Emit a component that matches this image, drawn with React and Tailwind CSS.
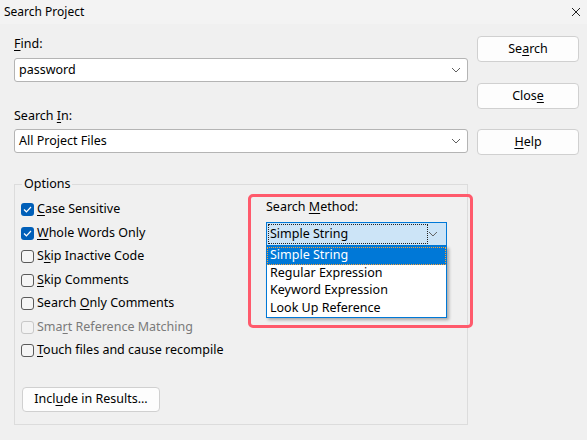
import React from 'react'

const font = { fontFamily: '"Noto Sans", "Open Sans", sans-serif' }

const U = ({ children }) => <span className="underline underline-offset-[2px]">{children}</span>

const Chevron = ({ className = '' }) => (
  <svg width="10" height="6" viewBox="0 0 10 6" className={className}>
    <path d="M1 1 L5 5 L9 1" fill="none" stroke="#606060" strokeWidth="1" />
  </svg>
)

const Combo = ({ value }) => (
  <div className="h-[24px] bg-white border border-[#b4b4b4] rounded-[3px] flex items-center justify-between pl-[4px] pr-[6px]">
    <span className="text-[12.5px]">{value}</span>
    <Chevron />
  </div>
)

const Button = ({ children }) => (
  <div className="h-[26px] bg-[#fdfdfd] border border-[#d0d0d0] rounded-[4px] flex items-center justify-center text-[12.5px]">
    {children}
  </div>
)

const Check = ({ checked, disabled, children }) => (
  <div className="h-[23.5px] flex items-center gap-[3px]">
    {checked ? (
      <div className="w-[13px] h-[13px] rounded-[3px] bg-[#005fb8] flex items-center justify-center">
        <svg width="9" height="7" viewBox="0 0 9 7">
          <path d="M1 3.5 L3.4 5.8 L8 1" fill="none" stroke="white" strokeWidth="1.2" />
        </svg>
      </div>
    ) : (
      <div className={`w-[13px] h-[13px] rounded-[3px] border ${disabled ? 'border-[#c8c8c8] bg-[#f3f3f3]' : 'border-[#5a5a5a] bg-[#f5f5f5]'}`} />
    )}
    <span className={`text-[12.5px] ${disabled ? 'text-[#7a7a7a]' : 'text-black'}`}>{children}</span>
  </div>
)

export default function App() {
  return (
    <div className="w-[587px] h-[440px] bg-[#f0f0f0] text-black flex flex-col relative overflow-hidden" style={font}>
      <div className="h-[24px] bg-[#f3f3f3] flex items-center justify-between pl-[4px] pr-[6px]">
        <span className="text-[12px]">Search Project</span>
        <svg width="10" height="10" viewBox="0 0 10 10">
          <path d="M1 1 L9 9 M9 1 L1 9" stroke="#222" strokeWidth="1" />
        </svg>
      </div>
      <div className="flex pl-[14px] gap-[9px]">
        <div className="w-[454px] flex flex-col">
          <div className="mt-[12px] h-[16px] leading-[16px] text-[12.5px]"><U>F</U>ind:</div>
          <div className="mt-[6px]"><Combo value="password" /></div>
          <div className="mt-[26px] h-[16px] leading-[16px] text-[12.5px]">Search <U>I</U>n:</div>
          <div className="mt-[5px]"><Combo value="All Project Files" /></div>
          <fieldset className="mt-[23px] h-[249px] border border-[#dcdcdc] relative">
            <legend className="ml-[7px] px-[2px] text-[12.5px] leading-[16px]">Options</legend>
            <div className="flex pl-[6px] pt-[6px]">
              <div className="flex flex-col w-[245px]">
                <Check checked><U>C</U>ase Sensitive</Check>
                <Check checked><U>W</U>hole Words Only</Check>
                <Check>S<U>k</U>ip Inactive Code</Check>
                <Check><U>S</U>kip Comments</Check>
                <Check>Search <U>O</U>nly Comments</Check>
                <Check disabled>Sma<U>r</U>t Reference Matching</Check>
                <Check><U>T</U>ouch files and cause recompile</Check>
                <div className="mt-[24px] ml-[1px] w-[138px] h-[25px] bg-[#fdfdfd] border border-[#d0d0d0] rounded-[4px] flex items-center justify-center text-[12.5px]">
                  Incl<U>u</U>de in Results...
                </div>
              </div>
              <div className="flex flex-col pt-[1px]">
                <div className="h-[16px] leading-[16px] text-[12.5px]">Search <U>M</U>ethod:</div>
                <div className="mt-[7px] relative">
                  <div className="w-[181px] h-[24px] bg-[#cce4f7] border border-[#0078d7] flex items-center justify-between pl-[1px] pr-[8px]">
                    <div className="w-[161px] h-[20px] border border-dotted border-[#222] flex items-center pl-[1px] text-[12.5px]">Simple String</div>
                    <Chevron />
                  </div>
                  <div className="absolute left-0 top-full w-[181px] bg-white border border-[#0078d7] shadow-[2px_2px_3px_rgba(0,0,0,0.3)] flex flex-col text-[12.5px]">
                    <div className="h-[17.5px] bg-[#0078d7] text-white border border-dotted border-[#f7a03a] flex items-center pl-[2px]">Simple String</div>
                    <div className="h-[17.5px] flex items-center pl-[3px]">Regular Expression</div>
                    <div className="h-[17.5px] flex items-center pl-[3px]">Keyword Expression</div>
                    <div className="h-[17.5px] flex items-center pl-[3px]">Look Up Reference</div>
                  </div>
                </div>
              </div>
            </div>
          </fieldset>
        </div>
        <div className="w-[102px] flex flex-col pt-[12px]">
          <Button>Se<U>a</U>rch</Button>
          <div className="mt-[21px]"><Button>Clos<U>e</U></Button></div>
          <div className="mt-[20px]"><Button><U>H</U>elp</Button></div>
        </div>
      </div>
      <div className="absolute left-[248px] top-[194px] w-[225px] h-[134px] border-[3px] border-[#ff5a6c] rounded-[5px] pointer-events-none" />
    </div>
  )
}
